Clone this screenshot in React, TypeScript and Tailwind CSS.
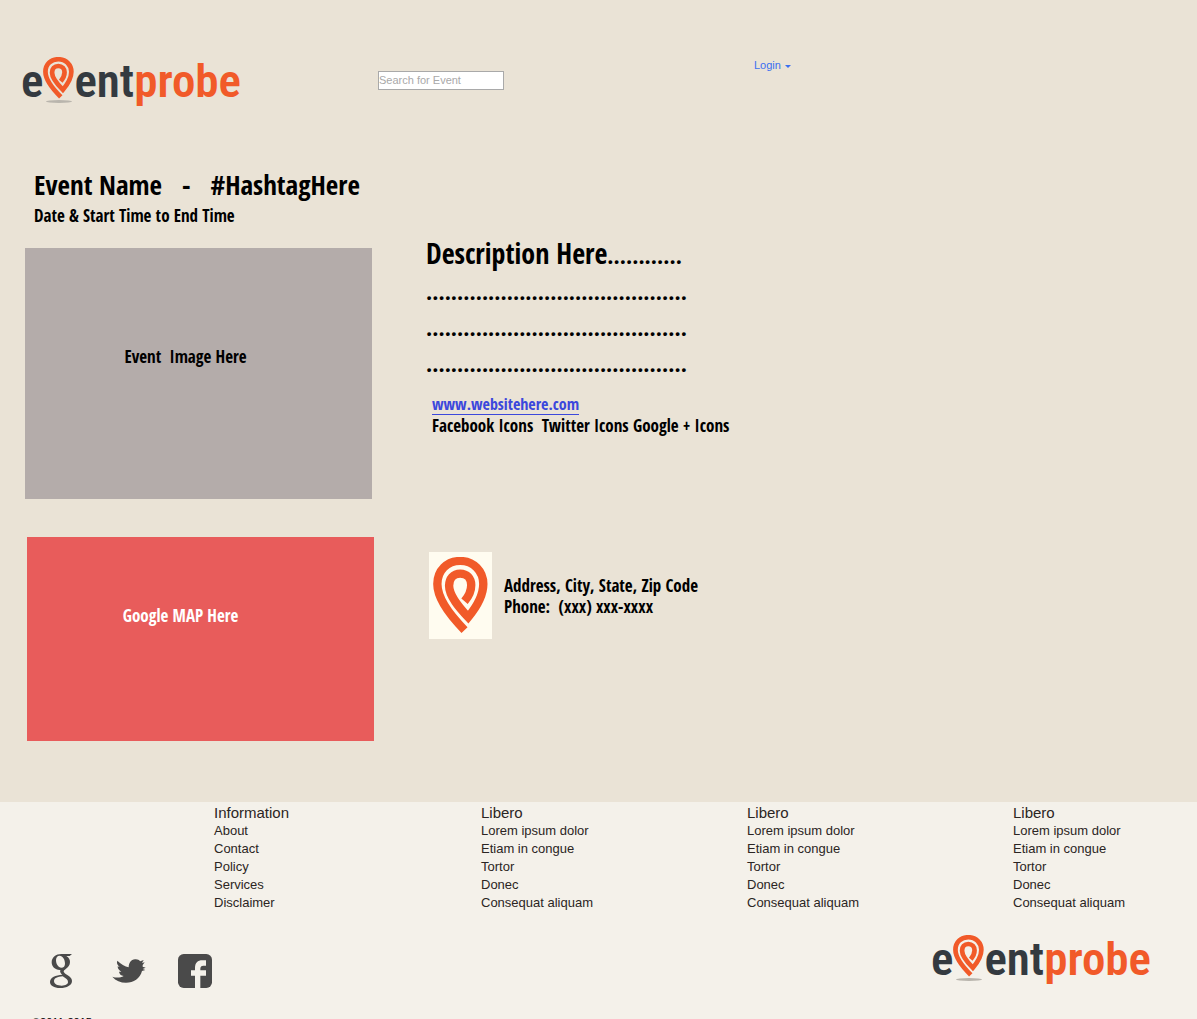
const linkColumns = [
  { title: "Information", links: ["About", "Contact", "Policy", "Services", "Disclaimer"] },
  { title: "Libero", links: ["Lorem ipsum dolor", "Etiam in congue", "Tortor", "Donec", "Consequat aliquam"] },
  { title: "Libero", links: ["Lorem ipsum dolor", "Etiam in congue", "Tortor", "Donec", "Consequat aliquam"] },
  { title: "Libero", links: ["Lorem ipsum dolor", "Etiam in congue", "Tortor", "Donec", "Consequat aliquam"] },
];

const dots = ".".repeat(42);

function Pin({ className }: { className: string }) {
  return (
    <svg viewBox="14 15 164 233" preserveAspectRatio="none" className={className} aria-hidden="true">
      <path
        d="M108 236C72 199 27 146 27 97C27 56 56 27 95 27C135 27 164 58 164 97C164 131 146 164 119 197C94 170 62 134 62 102C62 80 75 65 95 65C115 65 128 80 128 100C128 118 121 134 108 149"
        fill="none"
        stroke="#f15a29"
        strokeWidth="25"
        strokeMiterlimit="10"
      />
    </svg>
  );
}

function Logo() {
  return (
    <a href="#" aria-label="eventprobe" className="flex items-start font-['Roboto_Condensed','Open_Sans_Condensed',sans-serif] text-[47px] font-semibold leading-[48px] text-[#343a40]">
      <span>e</span>
      <span className="flex flex-col items-center">
        <Pin className="h-[42px] w-[31px]" />
        <span className="mt-px h-[3px] w-[26px] rounded-[50%] bg-[#b9b5ad]" />
      </span>
      <span>ent</span>
      <span className="text-[#f15a29]">probe</span>
    </a>
  );
}

function GoogleIcon() {
  return (
    <svg viewBox="0 0 66 102" className="h-[34px] w-[22px]" fill="#4a4a4a" fillRule="evenodd" aria-hidden="true">
      <path d="M66 0L59 6H49C57 11 60 17 60 24C60 34 54 40 48 44C43 48 41 50 41 52C41 55 43 57 47 60C57 67 66 71 66 81C66 94 51 102 30 102C12 102 0 95 0 84C0 70 17 63 37 62C32 58 29 54 31 48C16 49 5 38 5 25C5 10 18 0 34 0ZM29 5C22 5 18 11 18 18C18 30 25 41 34 41C41 41 45 36 45 29C45 16 38 5 29 5ZM38 67C22 68 12 73 12 81C12 90 22 95 35 95C47 95 54 90 54 84C54 77 48 73 38 67Z" />
    </svg>
  );
}

function TwitterIcon() {
  return (
    <svg viewBox="0 0 100 72" className="h-6 w-[34px]" fill="#4a4a4a" aria-hidden="true">
      <path d="M0 53C11 57 24 57 34 51C26 50 21 45 20 38L27 38C20 34 16 29 16 22L22 24C15 18 12 11 15 5C25 15 38 23 49 25C49 12 56 2 68 1C75 0 80 3 84 7L94 3L89 12L97 10L91 18L91 23L100 26L91 30L99 33L89 36C83 59 64 71 41 71C25 71 10 65 0 53Z" />
    </svg>
  );
}

function FacebookIcon() {
  return (
    <svg viewBox="0 0 102 102" className="size-[34px]" aria-hidden="true">
      <rect width="102" height="102" rx="17" fill="#4a4a4a" />
      <path d="M51 102V65H39V49H51V42C51 27 59 19 73 19H84V35H76C70 35 67 38 67 44V49H84V65H67V102Z" fill="#f4f1ea" />
    </svg>
  );
}

export default function App() {
  return (
    <div className="flex h-screen flex-col overflow-hidden bg-[#eae3d6] font-['Liberation_Sans',Arial,sans-serif] text-black">
      <header className="flex h-[169px] shrink-0 items-start pl-[21px] pt-[57px]">
        <div className="w-[357px] shrink-0">
          <Logo />
        </div>
        <input
          type="text"
          aria-label="Search for Event"
          placeholder="Search for Event"
          className="mt-[14px] h-[19px] w-[126px] border border-[#a9a9a9] bg-white pb-px text-[11px] placeholder:text-[#a9a9a9]"
        />
        <button type="button" className="ml-[250px] flex items-center gap-1 text-[11px] leading-4 text-[#3b6ff0]">
          Login
          <svg viewBox="0 0 6 3" className="mt-[2px] h-[3px] w-[6px]" fill="currentColor" aria-hidden="true">
            <path d="M0 0H6L3 3Z" />
          </svg>
        </button>
      </header>

      <main className="h-[633px] shrink-0 pl-[25px] font-['Open_Sans_Condensed','Open_Sans',sans-serif] text-[17px] font-bold leading-[21px]">
        <div className="flex">
          <div className="w-[401px] shrink-0">
            <div className="h-[79px] pl-[9px]">
              <h1 className="whitespace-pre pb-1 text-[27px] leading-8">{"Event Name   -   #HashtagHere"}</h1>
              <p>Date &amp; Start Time to End Time</p>
            </div>
            <div className="flex h-[251px] w-[347px] justify-center bg-[#b4acaa] pr-[26px] pt-[98px]">
              <span className="whitespace-pre">{"Event  Image Here"}</span>
            </div>
          </div>
          <div className="pt-[66px]">
            <div className="text-[23px] leading-9">
              <h2 className="text-[28px]">
                Description Here<span className="text-[23px]">............</span>
              </h2>
              <p>{dots}</p>
              <p>{dots}</p>
              <p>{dots}</p>
            </div>
            <div className="pl-[6px] pt-[14px]">
              <a href="#" className="block w-fit border-b border-[#3c48dc] text-[16px] leading-[19px] text-[#3c48dc]">www.websitehere.com</a>
              <p className="whitespace-pre">{"Facebook Icons  Twitter Icons Google + Icons"}</p>
            </div>
          </div>
        </div>
        <div className="flex pl-[2px] pt-[38px]">
          <div className="flex h-[204px] w-[347px] shrink-0 justify-center bg-[#e85c5b] pr-[40px] pt-[68px] text-white">
            Google MAP Here
          </div>
          <div className="ml-[55px] mt-[15px] flex h-[87px] w-[63px] shrink-0 justify-center bg-[#fffcf0] pt-[5px]">
            <Pin className="h-[77px] w-[55px]" />
          </div>
          <address className="ml-3 mt-[38px] whitespace-pre not-italic">
            <p>Address, City, State, Zip Code</p>
            <p>{"Phone:  (xxx) xxx-xxxx"}</p>
          </address>
        </div>
      </main>

      <footer className="shrink-0 bg-[#f4f1ea] pt-[2px] text-[#2b2523]">
        <nav className="grid grid-cols-[214fr_267fr_266fr_266fr_184fr]">
          <span />
          {linkColumns.map((column, index) => (
            <div key={index}>
              <h3 className="text-[15px] leading-[18px]">{column.title}</h3>
              <ul className="text-[13px] leading-[18px]">
                {column.links.map((link) => (
                  <li key={link}>
                    <a href="#">{link}</a>
                  </li>
                ))}
              </ul>
            </div>
          ))}
        </nav>
        <div className="flex items-start justify-between pl-[50px] pr-[46px] pt-[23px]">
          <div className="flex items-center pt-[19px]">
            <a href="#" aria-label="Google"><GoogleIcon /></a>
            <a href="#" aria-label="Twitter" className="ml-10"><TwitterIcon /></a>
            <a href="#" aria-label="Facebook" className="ml-8"><FacebookIcon /></a>
          </div>
          <Logo />
        </div>
        <p className="pl-8 pt-[26px] text-[11px] leading-4 text-black">©2011-2015</p>
      </footer>
    </div>
  );
}
